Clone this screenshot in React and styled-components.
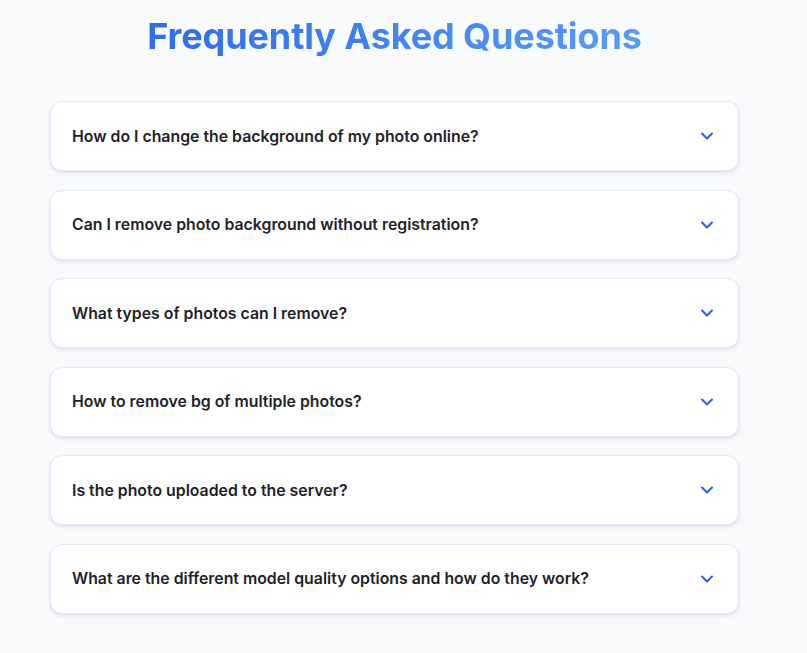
import React, { useState } from 'react'
import styled, { createGlobalStyle } from 'styled-components'
import { ChevronDown } from 'lucide-react'

const GlobalStyle = createGlobalStyle`
  html, body {
    margin: 0;
    padding: 0;
    background: #f8fafc;
  }
  body {
    font-family: Inter, "Noto Sans", sans-serif;
    -webkit-font-smoothing: antialiased;
  }
`

// outer section, holds title and list
const Section = styled.section`
  width: 689px;
  margin-left: 50px;
  padding-top: 14px;
  padding-bottom: 40px;
`

const Title = styled.h2`
  margin: 0 0 43px;
  text-align: center;
  font-size: 36px;
  line-height: 44px;
  font-weight: 700;
  letter-spacing: -0.1px;
  background: linear-gradient(90deg, #2563eb 0%, #60a5fa 100%);
  -webkit-background-clip: text;
  background-clip: text;
  color: transparent;
`

const List = styled.div`
  display: flex;
  flex-direction: column;
  gap: 18.6px;
`

const Card = styled.div`
  background: #ffffff;
  border: 1px solid #e6eaf8;
  border-radius: 12px;
  box-shadow: 0 2px 4px rgba(30, 41, 99, 0.08), 0 1px 2px rgba(30, 41, 99, 0.06);
  overflow: hidden;
`

const QuestionBtn = styled.button`
  width: 100%;
  height: 68px;
  display: flex;
  align-items: center;
  justify-content: space-between;
  padding: 0 21px;
  border: none;
  background: transparent;
  cursor: pointer;
  font-family: inherit;
  font-size: 15.85px;
  font-weight: 600;
  color: #1f2228;
  text-align: left;
`

const Chevron = styled(ChevronDown)`
  flex-shrink: 0;
  color: #2563eb;
  transition: transform 0.2s ease-in-out;
  transform: ${p => (p.$open ? 'rotate(180deg)' : 'none')};
`

const Answer = styled.div`
  padding: 0 21px 20px;
  font-size: 15px;
  line-height: 1.6;
  color: #4b5563;
`

const faqs = [
  { q: 'How do I change the background of my photo online?', a: 'Upload your photo, remove the background and pick a new one.' },
  { q: 'Can I remove photo background without registration?', a: 'Yes, no account is needed.' },
  { q: 'What types of photos can I remove?', a: 'People, products, animals, cars and more.' },
  { q: 'How to remove bg of multiple photos?', a: 'Use the batch mode to upload several photos at once.' },
  { q: 'Is the photo uploaded to the server?', a: 'No, everything is processed in your browser.' },
  { q: 'What are the different model quality options and how do they work?', a: 'Higher quality models are slower but give cleaner edges.' },
]

export default function App() {
  const [open, setOpen] = useState(null)

  return (
    <>
      <GlobalStyle />
      <Section>
        <Title>Frequently Asked Questions</Title>
        <List>
          {faqs.map((f, i) => (
            <Card key={i}>
              <QuestionBtn onClick={() => setOpen(open === i ? null : i)}>
                <span>{f.q}</span>
                <Chevron size={20} strokeWidth={2.5} $open={open === i} />
              </QuestionBtn>
              {open === i && <Answer>{f.a}</Answer>}
            </Card>
          ))}
        </List>
      </Section>
    </>
  )
}
